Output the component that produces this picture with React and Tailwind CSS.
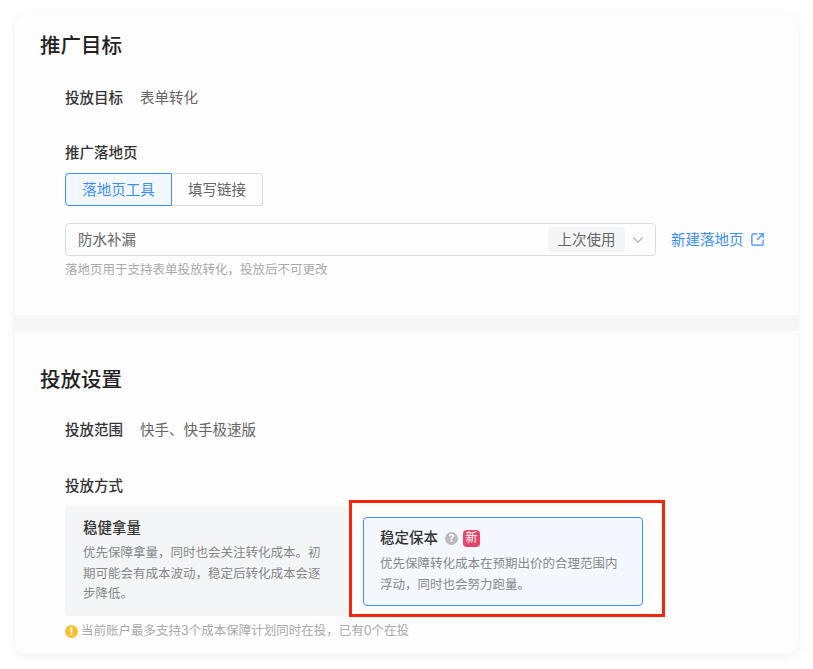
import React from "react";
import { ChevronDown, SquareArrowOutUpRight } from "lucide-react";

const font = "font-['Inter','Noto_Sans_CJK_SC',sans-serif]";

export default function App() {
  return (
    <div className={`${font} w-[813px] h-[669px] bg-white pt-[15px] pl-[15px] overflow-hidden`}>
      <div className="w-[783px] h-[639px] rounded-xl bg-[#fdfdfe] shadow-[0_2px_12px_rgba(0,0,0,0.07)] overflow-hidden">
        <section className="h-[300px] pl-[26px] pt-[17px]">
          <h2 className="-ml-px text-[20.5px] leading-[28px] font-medium text-[#222]">推广目标</h2>
          <div className="mt-[26px] pl-[24px]">
            <div className="flex text-[14.5px] leading-[24px]">
              <span className="w-[75px] font-medium text-[#333]">投放目标</span>
              <span className="text-[#666]">表单转化</span>
            </div>
            <div className="mt-[31px] text-[14.5px] leading-[24px] font-medium text-[#333]">推广落地页</div>
            <div className="mt-[8px] flex h-[33px] text-[14.5px]">
              <button className="w-[107px] rounded-l border border-[#3b8ff6] bg-[#f3f8fe] text-[#3b8ff6]">落地页工具</button>
              <button className="w-[91px] rounded-r border border-l-0 border-[#dcdcdc] text-[#666]">填写链接</button>
            </div>
            <div className="mt-[17px] flex items-center">
              <div className="w-[591px] h-[33px] rounded border border-[#dcdcdc] flex items-center pl-[12px] pr-[8px] text-[14.5px] text-[#666]">
                <span className="flex-1">防水补漏</span>
                <span className="w-[77px] h-[25px] rounded bg-[#f4f5f7] flex items-center justify-center">上次使用</span>
                <ChevronDown className="ml-[4px] text-[#b5b5b5]" size={18} strokeWidth={1.5} />
              </div>
              <a className="ml-[15px] text-[14.5px] text-[#3b8ff6]">新建落地页</a>
              <SquareArrowOutUpRight className="ml-[6px] text-[#3b8ff6]" size={15} />
            </div>
            <p className="mt-[5px] text-[12.5px] leading-[18px] text-[#aaa]">落地页用于支持表单投放转化，投放后不可更改</p>
          </div>
        </section>

        <div className="h-[16px] bg-[#f5f6f8]" />

        <section className="pl-[26px] pt-[35px]">
          <h2 className="-ml-px text-[20.5px] leading-[28px] font-medium text-[#222]">投放设置</h2>
          <div className="mt-[24px] pl-[24px]">
            <div className="flex text-[14.5px] leading-[24px]">
              <span className="w-[75px] font-medium text-[#333]">投放范围</span>
              <span className="text-[#666]">快手、快手极速版</span>
            </div>
            <div className="mt-[32px] text-[14.5px] leading-[24px] font-medium text-[#333]">投放方式</div>
            <div className="relative mt-[8px] flex items-start h-[110px]">
              <div className="w-[282px] h-[110px] rounded bg-[#f3f5f7] pl-[18px] pr-[20px] pt-[10px]">
                <div className="text-[14.5px] leading-[24px] font-medium text-[#333]">稳健拿量</div>
                <p className="mt-[3px] text-[12.5px] leading-[20.5px] text-[#888]">优先保障拿量，同时也会关注转化成本。初期可能会有成本波动，稳定后转化成本会逐步降低。</p>
              </div>
              <div className="ml-[16px] mt-[11px] w-[280px] h-[89px] rounded border border-[#3b8ff6] bg-[#f4f8fe] pl-[16px] pr-[24px] pt-[8px]">
                <div className="flex items-center h-[24px]">
                  <span className="text-[14.5px] font-medium text-[#333]">稳定保本</span>
                  <span className="ml-[7px] w-[13px] h-[13px] rounded-full bg-[#bbb] text-white text-[10px] font-bold flex items-center justify-center">?</span>
                  <span className="ml-[5px] w-[17px] h-[17px] rounded-sm bg-[#e8456b] text-white text-[12px] flex items-center justify-center">新</span>
                </div>
                <p className="mt-[4px] text-[12.5px] leading-[20.5px] text-[#888]">优先保障转化成本在预期出价的合理范围内浮动，同时也会努力跑量。</p>
              </div>
              <div className="absolute left-[284px] top-[-6px] w-[316px] h-[117px] border-[3px] border-[#f5250c] pointer-events-none" />
            </div>
            <div className="mt-[6px] flex items-center text-[12.5px] leading-[18px] text-[#aaa]">
              <span className="w-[13px] h-[13px] rounded-full bg-[#fbc02d] text-white text-[10px] font-bold flex items-center justify-center mr-[3px]">!</span>
              当前账户最多支持3个成本保障计划同时在投，已有0个在投
            </div>
          </div>
        </section>
      </div>
    </div>
  );
}
